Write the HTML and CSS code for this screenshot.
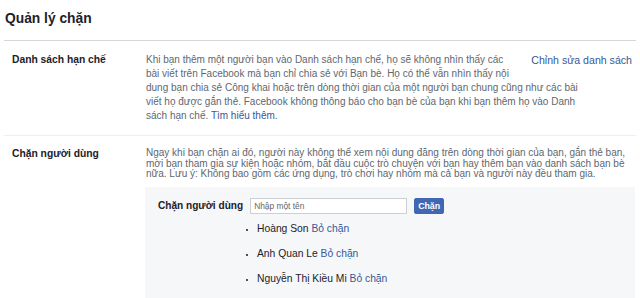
FILE: index.html
```html
<!DOCTYPE html>
<html lang="vi">
  <head>
    <meta charset="UTF-8" />
    <title>Quản lý chặn</title>
    <link rel="stylesheet" href="styles.css">
  </head>
  <body>
    <div class="settings">
      <h1 class="title">Quản lý chặn</h1>

      <div class="section first">
        <div class="label">Danh sách hạn chế</div>
        <div class="content restricted">
          <a class="edit-link" href="#">Chỉnh sửa danh sách</a>
          Khi bạn thêm một người bạn vào Danh sách hạn chế, họ sẽ không nhìn thấy các
          bài viết trên Facebook mà bạn chỉ chia sẻ với Bạn bè. Họ có thể vẫn nhìn thấy nội
          dung bạn chia sẻ Công khai hoặc trên dòng thời gian của một người bạn chung cũng như các bài
          viết họ được gắn thẻ. Facebook không thông báo cho bạn bè của bạn khi bạn thêm họ vào Danh
          sách hạn chế. <a href="#">Tìm hiểu thêm</a>.
        </div>
      </div>

      <div class="section">
        <div class="label">Chặn người dùng</div>
        <div class="content">
          <p class="block-info">
            Ngay khi bạn chặn ai đó, người này không thể xem nội dung đăng trên dòng thời gian của bạn, gắn thẻ bạn,
            mời bạn tham gia sự kiện hoặc nhóm, bắt đầu cuộc trò chuyện với bạn hay thêm bạn vào danh sách bạn bè
            nữa. Lưu ý: Không bao gồm các ứng dụng, trò chơi hay nhóm mà cả bạn và người này đều tham gia.
          </p>
          <div class="block-box">
            <form class="block-form">
              <label class="block-label" for="blockName">Chặn người dùng</label>
              <input id="blockName" class="block-input" type="text" placeholder="Nhập một tên" />
              <button class="block-btn" type="button">Chặn</button>
            </form>
            <ul class="blocked-list">
              <li>Hoàng Son <a href="#">Bỏ chặn</a></li>
              <li>Anh Quan Le <a href="#">Bỏ chặn</a></li>
              <li>Nguyễn Thị Kiều Mi <a href="#">Bỏ chặn</a></li>
            </ul>
          </div>
        </div>
      </div>
    </div>
  </body>
</html>
```

FILE: styles.css
```css
body {
  margin: 0;
  background-color: #fff;
  font-family: "Liberation Sans", Arial, sans-serif;
  font-size: 10.3px;
  color: #1d2129;
}

a {
  color: #385898;
  text-decoration: none;
}

.settings {
  margin: 0 4px;
}

.title {
  margin: 0;
  padding: 11px 1px 0;
  height: 41px;
  box-sizing: border-box;
  font-size: 13.8px;
  font-weight: bold;
  border-bottom: 1px solid #d3d6db;
}

.section {
  display: flex;
  padding: 12px 0 12px 8px;
  border-bottom: 1px solid #eceef1;
}

.section + .section {
  border-bottom: none;
  padding-bottom: 0;
}

.label {
  width: 134px;
  flex-shrink: 0;
  font-weight: bold;
  line-height: 14px;
}

.section + .section .label {
  line-height: 11px;
}

.content {
  flex: 1;
  color: #606770;
  font-size: 10px;
  margin-right: 1px;
}

.restricted {
  flex: none;
  width: 444px;
  line-height: 14px;
}

.edit-link {
  float: right;
  height: 28px;
  margin: 0 -42px 0 20px;
  font-size: 10.6px;
}

.block-info {
  margin: 0 2px 0 0;
  line-height: 10.5px;
}

.block-box {
  margin: 7px 0 0 -1px;
  padding: 11px 13px 8px;
  font-size: 10.3px;
  background-color: #f6f7f9;
}

.block-form {
  display: flex;
  align-items: center;
  gap: 7px;
}

.block-label {
  white-space: nowrap;
  font-size: 10.1px;
  font-weight: bold;
  color: #1d2129;
}

.block-input {
  width: 157px;
  height: 16px;
  box-sizing: border-box;
  margin: 0;
  padding: 0 3px;
  border: 1px solid #ccd0d5;
  font-family: inherit;
  font-size: 8.4px;
}

.block-input::placeholder {
  color: #606770;
}

.block-btn {
  width: 30px;
  height: 16px;
  padding: 0;
  border: 1px solid #4267b2;
  border-radius: 2px;
  background-color: #4267b2;
  color: #fff;
  font-family: inherit;
  font-size: 8.8px;
  font-weight: bold;
}

.blocked-list {
  margin: 2px 0 0;
  padding-left: 99px;
  list-style: square;
  color: #1d2129;
}

.blocked-list li {
  line-height: 25px;
}

.blocked-list li::marker {
  color: #4b4f56;
  font-size: 8px;
}
```
